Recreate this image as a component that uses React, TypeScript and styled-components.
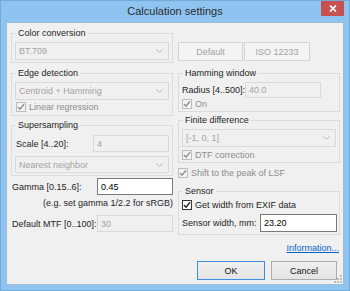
import React from "react";
import styled, { createGlobalStyle } from "styled-components";

const Global = createGlobalStyle`
  html, body { margin: 0; padding: 0; }
  body { font-family: "Liberation Sans", Arial, sans-serif; font-size: 9px; color: #1e1e1e; }
  * { box-sizing: border-box; }
`;

const Window = styled.div`
  width: 350px;
  height: 291px;
  background: #8fc4f1;
  border: 1px solid #74a9db;
  display: flex;
  flex-direction: column;
`;

const TitleBar = styled.div`
  height: 21px;
  display: flex;
  align-items: flex-start;
  flex-shrink: 0;
`;

const Title = styled.div`
  flex: 1;
  text-align: center;
  font-size: 11px;
  line-height: 21px;
  color: #2b2b2b;
  padding-left: 28px;
`;

const CloseButton = styled.div`
  width: 23px;
  height: 15px;
  margin-right: 5px;
  background: #c75050;
  display: flex;
  align-items: center;
  justify-content: center;
`;

const Client = styled.div`
  flex: 1;
  margin: 0 5px 5px 5px;
  background: #f0f0f0;
  border: 1px solid #9fbbd6;
  padding: 5px 3px 0 4px;
  position: relative;
`;

const Columns = styled.div`
  display: grid;
  grid-template-columns: 162px 162px;
  column-gap: 5px;
`;

const Column = styled.div`
  display: flex;
  flex-direction: column;
`;

const Group = styled.fieldset<{ $mt?: number; $pb?: number }>`
  margin: ${(p) => p.$mt ?? 0}px 0 0 0;
  padding: 0 3px ${(p) => p.$pb ?? 2}px 3px;
  border: 1px solid #dcdcdc;
  min-width: 0;
  display: flex;
  flex-direction: column;
`;

const Legend = styled.legend`
  padding: 0 2px;
  margin-left: 1px;
  line-height: 10px;
  font-size: 9px;
  color: #1e1e1e;
`;

const Combo = styled.div<{ $mt?: number; $h?: number }>`
  margin-top: ${(p) => p.$mt ?? 0}px;
  height: ${(p) => p.$h ?? 18}px;
  border: 1px solid #d9d9d9;
  background: #f0f0f0;
  color: #a3a3a3;
  display: flex;
  align-items: center;
  justify-content: space-between;
  padding: 0 5px 0 3px;
`;

const Chevron = () => (
  <svg width="7" height="4" viewBox="0 0 7 4">
    <path d="M0.5 0.5 L3.5 3.5 L6.5 0.5" fill="none" stroke="#b5b5b5" strokeWidth="1" />
  </svg>
);

const CheckRow = styled.div<{ $mt?: number; $enabled?: boolean; $pl?: number }>`
  margin-top: ${(p) => p.$mt ?? 0}px;
  height: 12px;
  display: flex;
  align-items: center;
  gap: 3px;
  padding-left: ${(p) => p.$pl ?? 0}px;
  color: ${(p) => (p.$enabled ? "#1e1e1e" : "#8d8d8d")};
`;

const Box = styled.span<{ $enabled?: boolean }>`
  width: 10px;
  height: 10px;
  border: 1px solid ${(p) => (p.$enabled ? "#333" : "#bcbcbc")};
  background: ${(p) => (p.$enabled ? "#fff" : "#f4f4f4")};
  display: flex;
  align-items: center;
  justify-content: center;
`;

const Check = ({ enabled }: { enabled?: boolean }) => (
  <Box $enabled={enabled}>
    <svg width="8" height="8" viewBox="0 0 8 8">
      <path
        d="M1 4 L3 6.2 L7 1.2"
        fill="none"
        stroke={enabled ? "#222" : "#8d8d8d"}
        strokeWidth="1.4"
      />
    </svg>
  </Box>
);

const Checkbox = ({
  label,
  enabled,
  mt,
  pl,
}: {
  label: string;
  enabled?: boolean;
  mt?: number;
  pl?: number;
}) => (
  <CheckRow $mt={mt} $enabled={enabled} $pl={pl}>
    <Check enabled={enabled} />
    <span>{label}</span>
  </CheckRow>
);

const FieldRow = styled.div<{ $label: number; $input: number; $mt?: number; $h?: number }>`
  display: grid;
  grid-template-columns: ${(p) => p.$label}px ${(p) => p.$input}px;
  align-items: center;
  margin-top: ${(p) => p.$mt ?? 0}px;
  height: ${(p) => p.$h ?? 17}px;
`;

const FieldLabel = styled.span<{ $pl?: number }>`
  padding-left: ${(p) => p.$pl ?? 0}px;
  white-space: nowrap;
  color: #1e1e1e;
`;

const TextBox = styled.div<{ $enabled?: boolean }>`
  height: 100%;
  border: 1px solid ${(p) => (p.$enabled ? "#7a7a7a" : "#d9d9d9")};
  background: ${(p) => (p.$enabled ? "#ffffff" : "#f0f0f0")};
  color: ${(p) => (p.$enabled ? "#000" : "#a3a3a3")};
  padding-left: 3px;
  display: flex;
  align-items: center;
`;

const Hint = styled.div`
  margin-top: 2px;
  line-height: 12px;
  text-align: right;
  padding-right: 0px;
  white-space: nowrap;
`;

const ButtonRow = styled.div<{ $mt?: number; $gap: number; $justify: string; $pr?: number }>`
  display: flex;
  justify-content: ${(p) => p.$justify};
  gap: ${(p) => p.$gap}px;
  margin-top: ${(p) => p.$mt ?? 0}px;
  padding-right: ${(p) => p.$pr ?? 0}px;
`;

const Button = styled.div<{ $w: number; $variant: "disabled" | "normal" | "default" }>`
  width: ${(p) => p.$w}px;
  height: 19px;
  display: flex;
  align-items: center;
  justify-content: center;
  border: 1px solid
    ${(p) =>
      p.$variant === "disabled" ? "#d5d5d5" : p.$variant === "default" ? "#3c8ee0" : "#acacac"};
  background: ${(p) =>
    p.$variant === "disabled" ? "#f4f4f4" : "linear-gradient(#efefef, #e4e4e4)"};
  color: ${(p) => (p.$variant === "disabled" ? "#a3a3a3" : "#111")};
`;

const InfoLink = styled.a`
  margin-top: 7px;
  line-height: 12px;
  text-align: right;
  padding-right: 1px;
  color: #0a64c8;
  text-decoration: underline;
  cursor: pointer;
`;

const Grip = styled.svg`
  position: absolute;
  right: 1px;
  bottom: 1px;
`;

export default function App() {
  return (
    <>
      <Global />
      <Window>
        <TitleBar>
          <Title>Calculation settings</Title>
          <CloseButton>
            <svg width="8" height="7" viewBox="0 0 8 7">
              <path d="M1 0.5 L7 6.5 M7 0.5 L1 6.5" stroke="#fff" strokeWidth="1.7" />
            </svg>
          </CloseButton>
        </TitleBar>
        <Client>
          <Columns>
            <Column>
              <Group>
                <Legend>Color conversion</Legend>
                <Combo $mt={4}>
                  <span>BT.709</span>
                  <Chevron />
                </Combo>
              </Group>
              <Group $mt={5}>
                <Legend>Edge detection</Legend>
                <Combo $mt={4}>
                  <span>Centroid + Hamming</span>
                  <Chevron />
                </Combo>
                <Checkbox label="Linear regression" mt={1} pl={1} />
              </Group>
              <Group $mt={4}>
                <Legend>Supersampling</Legend>
                <FieldRow $label={78} $input={76} $mt={5}>
                  <FieldLabel $pl={1}>Scale [4..20]:</FieldLabel>
                  <TextBox>4</TextBox>
                </FieldRow>
                <Combo $mt={4} $h={17}>
                  <span>Nearest neighbor</span>
                  <Chevron />
                </Combo>
              </Group>
              <FieldRow $label={86} $input={76} $mt={2}>
                <FieldLabel $pl={1}>Gamma [0.15..6]:</FieldLabel>
                <TextBox $enabled>0.45</TextBox>
              </FieldRow>
              <Hint>(e.g. set gamma 1/2.2 for sRGB)</Hint>
              <FieldRow $label={86} $input={76} $mt={6}>
                <FieldLabel $pl={1}>Default MTF [0..100]:</FieldLabel>
                <TextBox>30</TextBox>
              </FieldRow>
            </Column>
            <Column>
              <ButtonRow $mt={14} $gap={1} $justify="flex-start">
                <Button $w={65} $variant="disabled">Default</Button>
                <Button $w={66} $variant="disabled">ISO 12233</Button>
              </ButtonRow>
              <Group $mt={7} $pb={1}>
                <Legend>Hamming window</Legend>
                <FieldRow $label={63} $input={76} $mt={4} $h={16}>
                  <FieldLabel>Radius [4..500]:</FieldLabel>
                  <TextBox>40.0</TextBox>
                </FieldRow>
                <Checkbox label="On" />
              </Group>
              <Group $mt={3} $pb={1}>
                <Legend>Finite difference</Legend>
                <Combo $mt={4}>
                  <span>[-1, 0, 1]</span>
                  <Chevron />
                </Combo>
                <Checkbox label="DTF correction" mt={2} />
              </Group>
              <Checkbox label="Shift to the peak of LSF" mt={4} />
              <Group $mt={7}>
                <Legend>Sensor</Legend>
                <Checkbox label="Get width from EXIF data" mt={3} enabled />
                <FieldRow $label={78} $input={77} $mt={3} $h={18}>
                  <FieldLabel>Sensor width, mm:</FieldLabel>
                  <TextBox $enabled>23.20</TextBox>
                </FieldRow>
              </Group>
              <InfoLink>Information...</InfoLink>
              <ButtonRow $mt={7} $gap={6} $justify="flex-end" $pr={3}>
                <Button $w={68} $variant="default">OK</Button>
                <Button $w={66} $variant="normal">Cancel</Button>
              </ButtonRow>
            </Column>
          </Columns>
          <Grip width="9" height="9" viewBox="0 0 9 9">
            <g fill="#bdbdbd">
              <rect x="7" y="1" width="2" height="2" />
              <rect x="4" y="4" width="2" height="2" />
              <rect x="7" y="4" width="2" height="2" />
              <rect x="1" y="7" width="2" height="2" />
              <rect x="4" y="7" width="2" height="2" />
              <rect x="7" y="7" width="2" height="2" />
            </g>
          </Grip>
        </Client>
      </Window>
    </>
  );
}
